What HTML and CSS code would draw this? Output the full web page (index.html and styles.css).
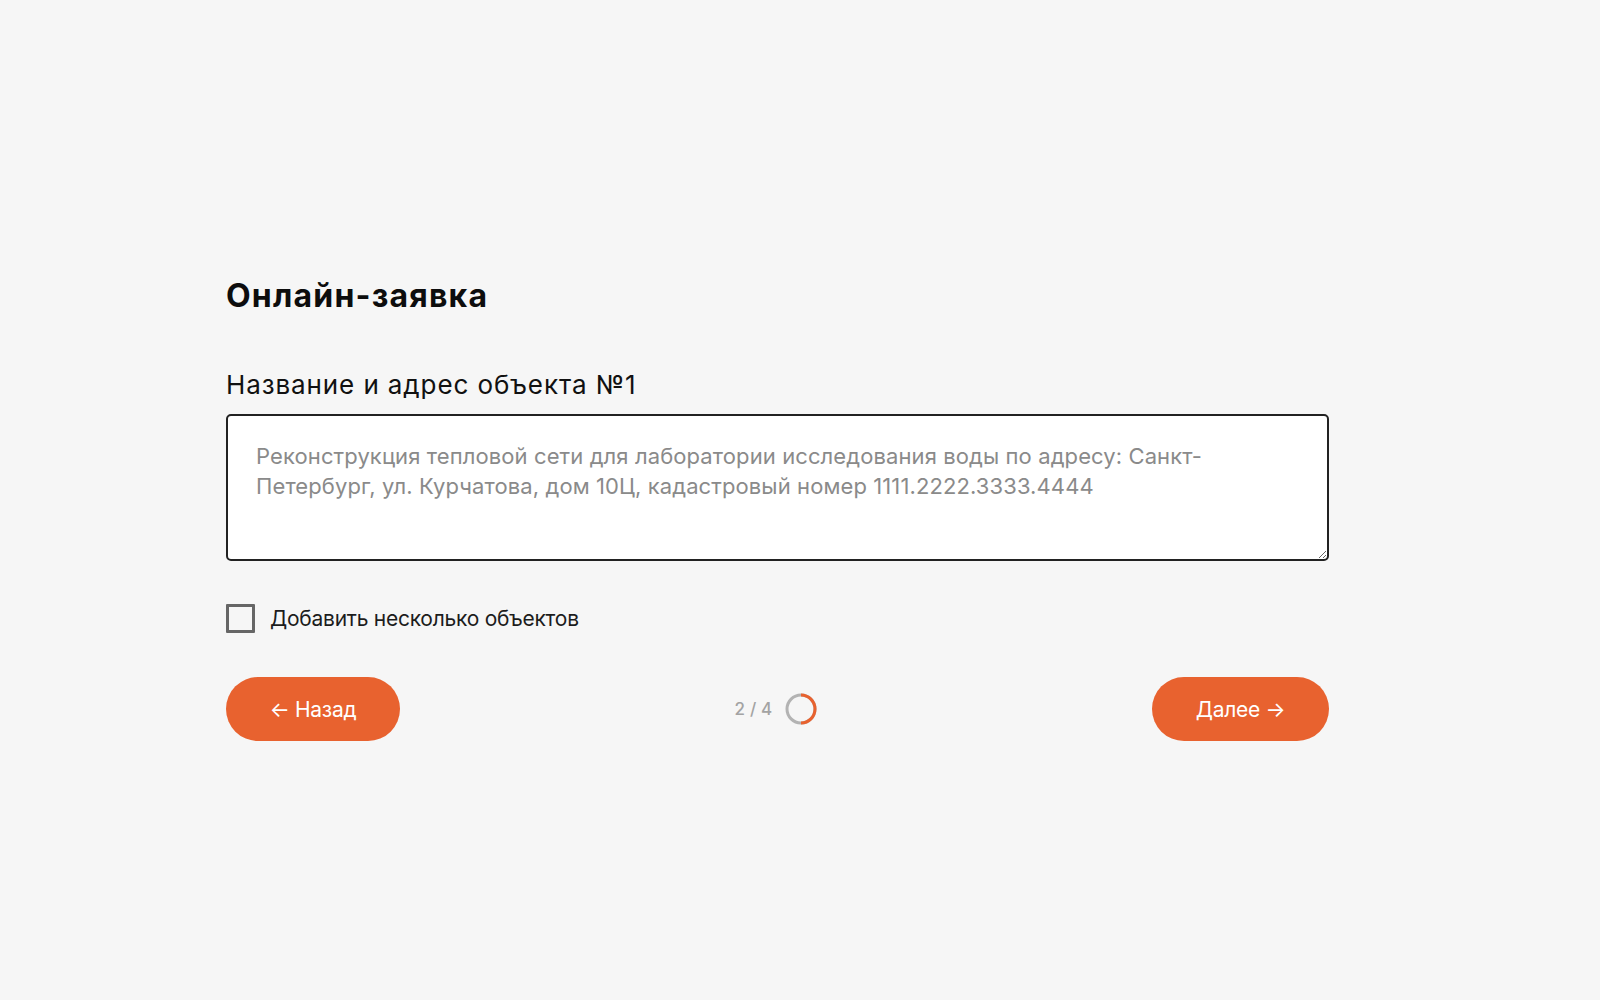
FILE: index.html
```html
<!DOCTYPE html>
<html lang="ru">
<head>
<meta charset="utf-8">
<title>Онлайн-заявка</title>
<link rel="stylesheet" href="styles.css">
</head>
<body>
<main class="page">
  <form class="form">
    <h1 class="title">Онлайн-заявка</h1>
    <label class="field-label" for="obj">Название и адрес объекта №1</label>
    <textarea id="obj" class="field" placeholder="Реконструкция тепловой сети для лаборатории исследования воды по адресу: Санкт-Петербург, ул. Курчатова, дом 10Ц, кадастровый номер 1111.2222.3333.4444"></textarea>
    <label class="check">
      <input type="checkbox" class="check-box">
      <span class="check-text">Добавить несколько объектов</span>
    </label>
    <div class="nav">
      <button type="button" class="btn">← Назад</button>
      <div class="pager">
        <span class="pager-text">2 / 4</span>
        <svg class="pager-ring" width="32" height="32" viewBox="0 0 32 32">
          <circle cx="16" cy="16" r="14" fill="none" stroke="#b3b3b3" stroke-width="3"/>
          <path d="M16 2 A14 14 0 0 1 16 30" fill="none" stroke="#e8622f" stroke-width="3"/>
        </svg>
      </div>
      <button type="button" class="btn btn-next">Далее →</button>
    </div>
  </form>
</main>
</body>
</html>
```
FILE: styles.css
```css
* { box-sizing: border-box; }
html, body { margin: 0; padding: 0; }
body {
  background: #f6f6f6;
  font-family: Inter, "Noto Sans", "Liberation Sans", sans-serif;
  color: #111;
  width: 1600px;
  height: 1000px;
  overflow: hidden;
}
.page {
  padding: 276px 0 0 226px;
}
.form {
  width: 1103px;
  display: flex;
  flex-direction: column;
}
.title {
  margin: 0;
  font-size: 32px;
  line-height: 40px;
  font-weight: 700;
  color: #0d0d0d;
  letter-spacing: 1.2px;
}
.field-label {
  margin-top: 54px;
  font-size: 26px;
  line-height: 30px;
  font-weight: 400;
  color: #111;
  letter-spacing: 0.9px;
}
.field {
  margin-top: 14px;
  height: 147px;
  width: 100%;
  border: 2px solid #222;
  border-radius: 5px;
  background: #fff;
  padding: 25px 28px;
  font-family: inherit;
  font-size: 22px;
  line-height: 30px;
  color: #222;
  resize: vertical;
  outline: none;
  letter-spacing: 0.1px;
}
.field::placeholder {
  color: #8a8a8a;
  letter-spacing: 0.1px;
}
.check {
  margin-top: 43px;
  display: flex;
  align-items: center;
  gap: 15px;
  cursor: pointer;
}
.check-box {
  appearance: none;
  -webkit-appearance: none;
  margin: 0;
  width: 29px;
  height: 29px;
  border: 3px solid #666;
  background: transparent;
  border-radius: 1px;
}
.check-text {
  font-size: 21px;
  line-height: 28px;
  color: #1c1c1c;
  letter-spacing: -0.25px;
}
.nav {
  margin-top: 44px;
  display: flex;
  align-items: center;
  justify-content: space-between;
}
.btn {
  height: 64px;
  width: 174px;
  border: none;
  border-radius: 32px;
  background: #e8622f;
  color: #fff;
  font-family: inherit;
  font-size: 21px;
  font-weight: 400;
  letter-spacing: -0.3px;
  cursor: pointer;
}
.btn-next {
  width: 177px;
}
.pager {
  display: flex;
  align-items: center;
  gap: 13px;
  margin-left: 0;
}
.pager-text {
  font-size: 17px;
  font-weight: 500;
  color: #a3a3a3;
  letter-spacing: 0.2px;
}
.pager-ring {
  display: block;
}
```
